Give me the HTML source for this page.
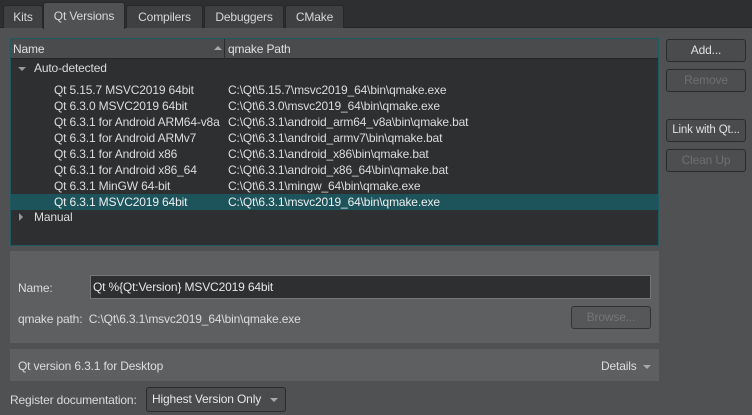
<!DOCTYPE html>
<html><head><style>
*{margin:0;padding:0;box-sizing:border-box}
body{width:752px;height:415px;background:#505152;font-family:"Liberation Sans",sans-serif;font-size:12px;letter-spacing:-0.15px;color:#dcdcdc;position:relative;overflow:hidden}
.a{position:absolute;white-space:nowrap}
.top{left:0;top:0;width:752px;height:28px;background:#2e2f31;border-bottom:1px solid #232425}
.tab{position:absolute;top:5px;height:23px;background:#3f4041;border:1px solid #262728;border-bottom:none;border-radius:3px 3px 0 0;text-align:center;line-height:22px;color:#d8d8d8}
.tab.sel{top:2px;height:27px;background:#505152;line-height:26px}
.tree{left:10px;top:38px;width:649px;height:208px;background:#2e2f31;border:1px solid #1e5a62}
.hdr{left:0;top:0;width:647px;height:20px;background:#4a4b4c;border-bottom:1px solid #242526}
.btn{position:absolute;left:666px;width:80px;height:23px;border:1px solid #2a2b2c;border-radius:3px;background:#4a4b4c;text-align:center;line-height:21px;color:#e0e0e0}
.btn.dis{color:#6e6f70;background:#4d4e4f}
.panel{background:#5e5f60;position:absolute}
.row{position:absolute;height:16px;line-height:16px}
</style></head><body>
<div class="a top"></div>
<div class="tab" style="left:3px;width:40px">Kits</div>
<div class="tab sel" style="left:43px;width:82px">Qt Versions</div>
<div class="tab" style="left:126px;width:77px">Compilers</div>
<div class="tab" style="left:204px;width:80px">Debuggers</div>
<div class="tab" style="left:285px;width:59px">CMake</div>

<div class="a tree">
 <div class="a hdr"></div>
 <div class="a" style="left:2px;top:3px;color:#e0e0e0">Name</div>
 <div class="a" style="left:203px;top:7px;width:0;height:0;border-left:4px solid transparent;border-right:4px solid transparent;border-bottom:4px solid #aaa"></div>
 <div class="a" style="left:213px;top:0;width:1px;height:20px;background:#2a2b2c"></div>
 <div class="a" style="left:217px;top:3px;color:#e0e0e0">qmake Path</div>
 <div class="a" style="left:7px;top:28px;width:0;height:0;border-left:4px solid transparent;border-right:4px solid transparent;border-top:4px solid #999"></div>
 <div class="a" style="left:23px;top:22px">Auto-detected</div>
 <div class="a" style="left:0;top:155px;width:647px;height:16px;background:#1d545c"></div>
 <div class="row" style="left:43px;top:43px">Qt 5.15.7 MSVC2019 64bit</div><div class="row" style="left:217px;top:43px">C:\Qt\5.15.7\msvc2019_64\bin\qmake.exe</div>
 <div class="row" style="left:43px;top:59px">Qt 6.3.0 MSVC2019 64bit</div><div class="row" style="left:217px;top:59px">C:\Qt\6.3.0\msvc2019_64\bin\qmake.exe</div>
 <div class="row" style="left:43px;top:75px">Qt 6.3.1 for Android ARM64-v8a</div><div class="row" style="left:217px;top:75px">C:\Qt\6.3.1\android_arm64_v8a\bin\qmake.bat</div>
 <div class="row" style="left:43px;top:91px">Qt 6.3.1 for Android ARMv7</div><div class="row" style="left:217px;top:91px">C:\Qt\6.3.1\android_armv7\bin\qmake.bat</div>
 <div class="row" style="left:43px;top:107px">Qt 6.3.1 for Android x86</div><div class="row" style="left:217px;top:107px">C:\Qt\6.3.1\android_x86\bin\qmake.bat</div>
 <div class="row" style="left:43px;top:123px">Qt 6.3.1 for Android x86_64</div><div class="row" style="left:217px;top:123px">C:\Qt\6.3.1\android_x86_64\bin\qmake.bat</div>
 <div class="row" style="left:43px;top:139px">Qt 6.3.1 MinGW 64-bit</div><div class="row" style="left:217px;top:139px">C:\Qt\6.3.1\mingw_64\bin\qmake.exe</div>
 <div class="row" style="left:43px;top:155px;color:#eee">Qt 6.3.1 MSVC2019 64bit</div><div class="row" style="left:217px;top:155px;color:#eee">C:\Qt\6.3.1\msvc2019_64\bin\qmake.exe</div>
 <div class="a" style="left:8px;top:174px;width:0;height:0;border-top:4px solid transparent;border-bottom:4px solid transparent;border-left:4px solid #999"></div>
 <div class="a" style="left:23px;top:171px">Manual</div>
</div>

<div class="btn" style="top:39px">Add...</div>
<div class="btn dis" style="top:69px">Remove</div>
<div class="btn" style="top:119px;font-size:11.5px">Link with Qt...</div>
<div class="btn dis" style="top:149px">Clean Up</div>

<div class="panel" style="left:10px;top:251px;width:649px;height:92px"></div>
<div class="a" style="left:18px;top:281px">Name:</div>
<div class="a" style="left:90px;top:275px;width:561px;height:24px;background:#2e2f31;border:1px solid #777;padding-left:2px;line-height:22px;color:#e6e6e6">Qt %{Qt:Version} MSVC2019 64bit</div>
<div class="a" style="left:18px;top:312px">qmake path:&nbsp; C:\Qt\6.3.1\msvc2019_64\bin\qmake.exe</div>
<div class="a" style="left:571px;top:306px;width:80px;height:23px;border:1px solid #333;border-radius:3px;background:#565758;color:#757677;text-align:center;line-height:21px">Browse...</div>

<div class="panel" style="left:10px;top:349px;width:649px;height:32px"></div>
<div class="a" style="left:18px;top:359px">Qt version 6.3.1 for Desktop</div>
<div class="a" style="left:601px;top:359px">Details</div>
<div class="a" style="left:643px;top:365px;width:0;height:0;border-left:4px solid transparent;border-right:4px solid transparent;border-top:4px solid #aaa"></div>

<div class="a" style="left:10px;top:393px">Register documentation:</div>
<div class="a" style="left:146px;top:387px;width:140px;height:25px;border:1px solid #2a2b2c;border-radius:3px;background:#4a4b4c;padding-left:5px;line-height:23px;color:#e6e6e6">Highest Version Only</div>
<div class="a" style="left:270px;top:398px;width:0;height:0;border-left:4px solid transparent;border-right:4px solid transparent;border-top:4px solid #aaa"></div>
</body></html>
